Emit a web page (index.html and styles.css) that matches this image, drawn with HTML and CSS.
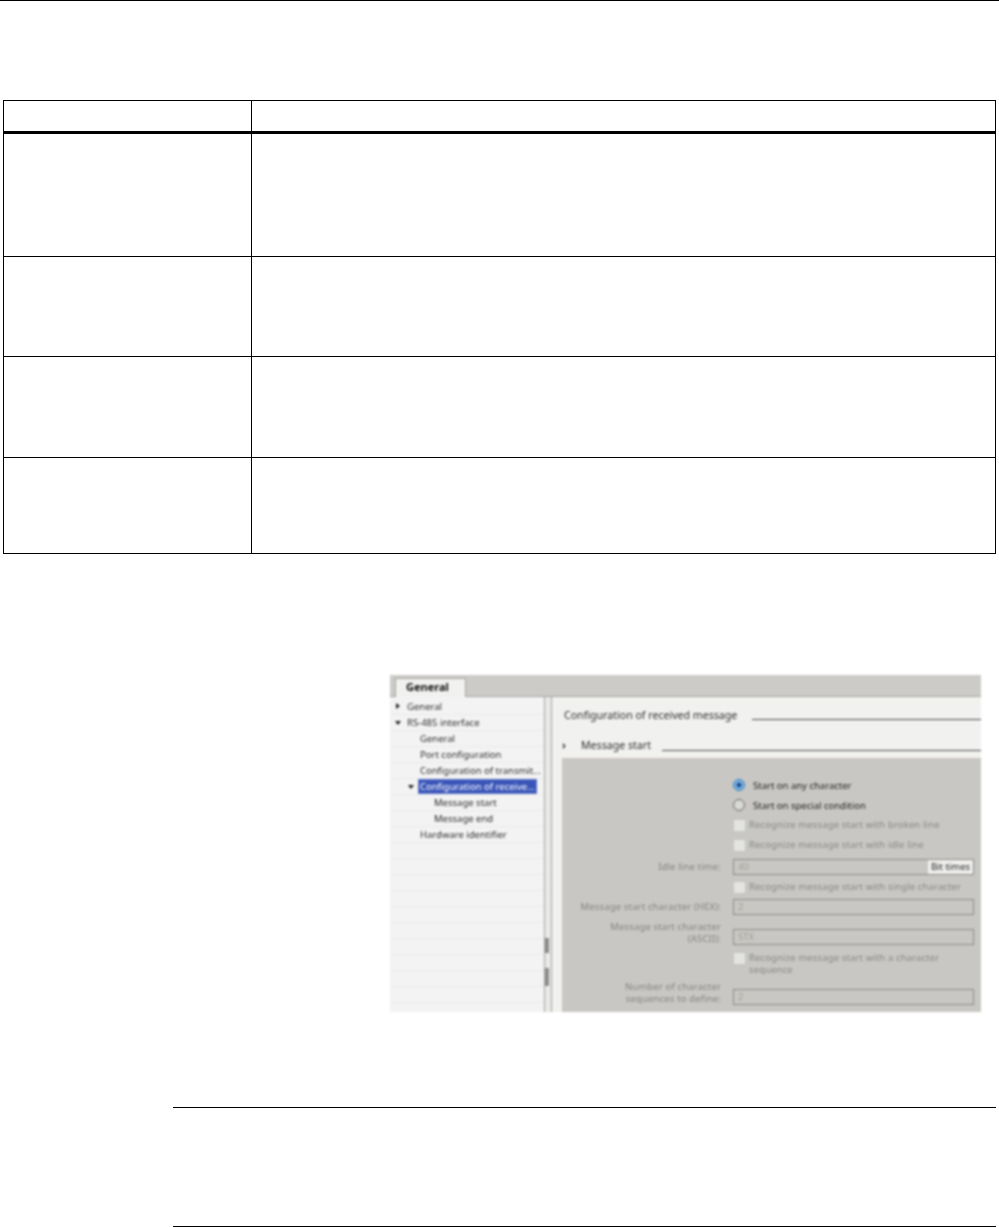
FILE: index.html
```html
<!DOCTYPE html>
<html lang="en">
<head>
    <meta charset="UTF-8">
    <meta name="viewport" content="width=device-width, initial-scale=1.0">
    <title>Configuration of received message</title>
    <link rel="stylesheet" href="styles.css">
</head>
<body>
    <div class="page-rule"></div>

    <table class="param-table">
        <tr class="row-head"><th class="col-name"></th><th></th></tr>
        <tr class="row-a"><td></td><td></td></tr>
        <tr class="row-b"><td></td><td></td></tr>
        <tr class="row-c"><td></td><td></td></tr>
        <tr class="row-d"><td></td><td></td></tr>
    </table>

    <div class="shot">
        <div class="tabbar"><span class="tab">General</span></div>
        <div class="shot-body">
            <ul class="tree">
                <li class="lvl0"><span class="arrow arrow-right"></span>General</li>
                <li class="lvl0"><span class="arrow arrow-down"></span>RS-485 interface</li>
                <li class="lvl1">General</li>
                <li class="lvl1">Port configuration</li>
                <li class="lvl1">Configuration of transmit...</li>
                <li class="lvl1"><span class="arrow arrow-down arrow-sub"></span><span class="selected">Configuration of receive...</span></li>
                <li class="lvl2">Message start</li>
                <li class="lvl2">Message end</li>
                <li class="lvl1">Hardware identifier</li>
                <li></li><li></li><li></li><li></li><li></li><li></li><li></li><li></li><li></li><li></li>
            </ul>
            <div class="splitter">
                <span class="grip grip-left"></span>
                <span class="grip grip-right"></span>
            </div>
            <div class="editor">
                <div class="editor-title"><span>Configuration of received message</span><i class="title-line"></i></div>
                <div class="section-title"><span class="chevron">&#8250;</span><span>Message start</span><i class="title-line"></i></div>
                <div class="form">
                    <div class="form-row"><span class="label"></span><span class="radio radio-on"></span><span class="opt">Start on any character</span></div>
                    <div class="form-row"><span class="label"></span><span class="radio"></span><span class="opt">Start on special condition</span></div>
                    <div class="form-row"><span class="label"></span><span class="check"></span><span class="opt-off">Recognize message start with broken line</span></div>
                    <div class="form-row"><span class="label"></span><span class="check"></span><span class="opt-off">Recognize message start with idle line</span></div>
                    <div class="form-row row-idle"><span class="label">Idle line time:</span><div class="field"><span>40</span><b class="unit">Bit times</b></div></div>
                    <div class="form-row"><span class="label"></span><span class="check"></span><span class="opt-off">Recognize message start with single character</span></div>
                    <div class="form-row"><span class="label">Message start character (HEX):</span><div class="field"><span>2</span></div></div>
                    <div class="form-row row-ascii"><span class="label">Message start character<br>(ASCII):</span><div class="field"><span>STX</span></div></div>
                    <div class="form-row row-seq"><span class="label"></span><span class="check"></span><span class="opt-off">Recognize message start with a character<br>sequence</span></div>
                    <div class="form-row row-num"><span class="label">Number of character<br>sequences to define:</span><div class="field"><span>2</span></div></div>
                </div>
            </div>
        </div>
    </div>

    <div class="note-box"></div>
</body>
</html>
```

FILE: styles.css
```css
body {
    margin: 0;
    background-color: #fff;
    font-family: "Noto Sans", "Open Sans", sans-serif;
}
.page-rule {
    height: 1px;
    background-color: #000;
}

/* empty parameter table */
.param-table {
    width: 993px;
    height: 453px;
    margin: 99px 0 0 3px;
    border-collapse: collapse;
    table-layout: fixed;
}
.param-table th,
.param-table td {
    border: 1.5px solid #000;
    padding: 0;
}
.col-name {
    width: 247px;
}
.row-head th {
    border-bottom-width: 3px;
}
.row-head { height: 32px; }
.row-a { height: 124px; }
.row-b { height: 100px; }
.row-c { height: 101px; }
.row-d { height: 96px; }

/* blurred software screenshot */
.shot {
    width: 591px;
    height: 337px;
    margin: 121px 0 0 390px;
    overflow: hidden;
    background-color: #f2f2f0;
    font-size: 9.5px;
    color: #2c2c2c;
    filter: blur(0.8px);
}
.tabbar {
    display: flex;
    align-items: flex-end;
    height: 21px;
    padding-left: 5px;
    background-color: #cdcbc7;
    border-bottom: 1px solid #a5a4a0;
}
.tab {
    width: 71px;
    height: 19px;
    margin-bottom: -1px;
    box-sizing: border-box;
    padding: 0 0 0 10px;
    background-color: #f1f1ef;
    border: 1px solid #a5a4a0;
    border-bottom: 0;
    font-size: 11px;
    font-weight: 700;
    color: #111;
}
.shot-body {
    display: flex;
    height: 315px;
}

.tree {
    width: 154px;
    margin: 0;
    padding: 2px 0 0;
    list-style: none;
    background-color: #f3f3f3;
}
.tree li {
    position: relative;
    height: 15px;
    line-height: 15px;
    border-bottom: 1px solid #ebebeb;
    white-space: nowrap;
}
.lvl0 { padding-left: 17px; }
.lvl1 { padding-left: 30px; }
.lvl2 { padding-left: 44px; }
.arrow {
    position: absolute;
    width: 0;
    height: 0;
}
.arrow-right {
    left: 6px;
    top: 4px;
    border-left: 4px solid #222;
    border-top: 3.5px solid transparent;
    border-bottom: 3.5px solid transparent;
}
.arrow-down {
    left: 5px;
    top: 6px;
    border-top: 4px solid #222;
    border-left: 3.5px solid transparent;
    border-right: 3.5px solid transparent;
}
.arrow-sub {
    left: 18px;
}
.selected {
    display: inline-block;
    width: 119px;
    height: 15px;
    margin-left: -2px;
    padding-left: 2px;
    box-sizing: border-box;
    background-color: #3a55b8;
    color: #fff;
    outline: 1px dotted #8fa0e0;
    outline-offset: -1px;
}

.splitter {
    position: relative;
    width: 6px;
    flex: none;
    background-color: #e9e9e7;
    border-left: 1px solid #a3a3a0;
    border-right: 1px solid #a3a3a0;
}
.grip {
    position: absolute;
    left: 0;
    width: 4px;
    background-color: #8d8d8b;
}
.grip-left { top: 241px; height: 15px; }
.grip-right { top: 271px; height: 18px; }

.editor {
    flex: 1;
    min-width: 0;
    background-color: #f1f1ef;
    overflow: hidden;
}
.editor-title,
.section-title {
    display: flex;
    align-items: center;
    font-size: 10.6px;
    color: #2c2c2c;
    white-space: nowrap;
}
.editor-title {
    height: 24px;
    margin-top: 6px;
    padding-left: 12px;
}
.section-title {
    height: 24px;
    margin-top: 6px;
    padding-left: 10px;
}
.chevron {
    width: 19px;
    font-weight: 700;
}
.title-line {
    flex: 1;
    height: 1px;
    margin: 9px 0 0 15px;
    background-color: #4a4a48;
}
.section-title .title-line {
    margin: 11px 0 0 11px;
}

.form {
    margin: 1px 0 0 10px;
    padding-top: 17px;
    height: 254px;
    box-sizing: border-box;
    background-color: #c9c7c3;
    font-size: 9.5px;
}
.form-row {
    display: flex;
    align-items: center;
    height: 20px;
}
.row-idle { height: 22px; padding-top: 1px; margin-bottom: -1px; }
.row-ascii { height: 28px; align-items: flex-end; }
.row-seq { height: 22px; align-items: flex-start; margin-top: 7px; }
.row-num { height: 31px; align-items: flex-end; }
.label {
    width: 159px;
    flex: none;
    margin-right: 12px;
    text-align: right;
    line-height: 12px;
    letter-spacing: 0.15px;
    color: #848482;
}
.radio {
    width: 12px;
    height: 12px;
    flex: none;
    box-sizing: border-box;
    margin-right: 8px;
    border: 1px solid #6c6c6a;
    border-radius: 50%;
    background-color: #d8d8d6;
}
.radio-on {
    border-color: #2f78b8;
    background: radial-gradient(circle, #1f4f90 0 2px, #7fb6e6 3px);
}
.check {
    width: 11px;
    height: 11px;
    flex: none;
    margin-right: 3px;
    background-color: #e4e4e2;
    border: 0.5px solid #c4c4c2;
}
.opt {
    color: #1e1e1e;
}
.opt-off {
    color: #888886;
    line-height: 12px;
    letter-spacing: 0.13px;
}
.field {
    display: flex;
    justify-content: space-between;
    width: 241px;
    height: 16px;
    box-sizing: border-box;
    padding-left: 4px;
    line-height: 14px;
    border: 1px solid #8a8a88;
    color: #a0a098;
}
.unit {
    width: 45px;
    box-sizing: border-box;
    text-align: center;
    font-weight: 400;
    color: #1e1e1e;
    background-color: #efefed;
}

.note-box {
    height: 118px;
    margin: 95px 3px 0 173px;
    border-top: 1px solid #000;
    border-bottom: 1px solid #000;
}
```
